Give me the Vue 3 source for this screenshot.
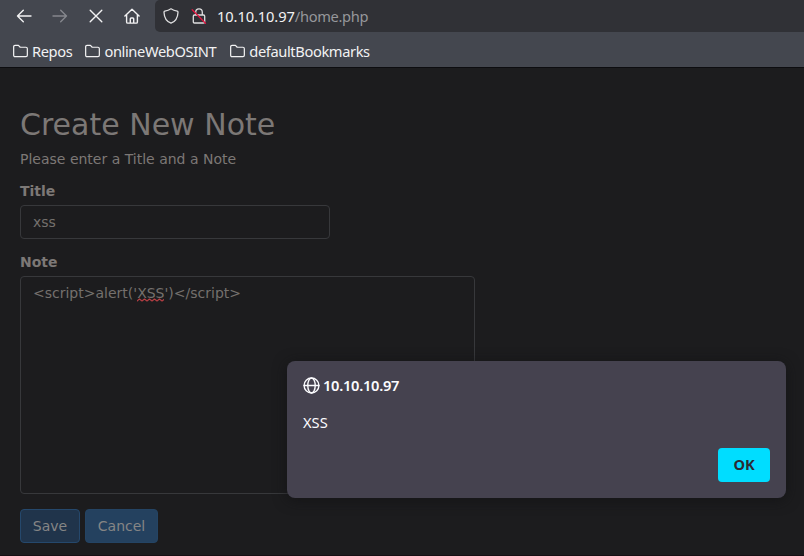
<script setup>
import { ref } from 'vue'

const bookmarks = ['Repos', 'onlineWebOSINT', 'defaultBookmarks']
const title = ref('xss')
const noteStart = "<script>alert('"
const noteEnd = "')<\/script>"
</script>

<template>
  <div class="window">
    <header class="chrome">
      <div class="navbar">
        <nav class="tools">
          <svg viewBox="0 0 16 16" class="icon"><path d="M15 8H1.5M7.3 2.2 1.5 8l5.8 5.8" /></svg>
          <svg viewBox="0 0 16 16" class="icon muted"><path d="M1 8h13.5M8.7 2.2 14.5 8l-5.800 5.800" /></svg>
          <svg viewBox="0 0 16 16" class="icon"><path d="m2.200 2.200 11.600 11.600M13.800 2.200 2.200 13.800" /></svg>
          <svg viewBox="0 0 16 16" class="icon"><path d="M.9 8 8 1.200 15.100 8M2.600 6.700v7.200q0 1.200 1.200 1.200h8.400q1.200 0 1.200-1.200V6.700M6.300 15v-4.200q0-.8.8-.8h1.800q.8 0 .8.8V15" /></svg>
        </nav>
        <div class="urlbar">
          <svg viewBox="0 0 16 16" class="icon"><path d="M8 .8c2 1.300 4.200 2 6.200 2.400.5.100.8.500.8 1C14.800 9.500 12.500 13.500 8 15.200 3.500 13.500 1.200 9.500 1 4.200c0-.5.300-.9.800-1C3.800 2.800 6 2.100 8 .8Z" /></svg>
          <svg viewBox="0 0 16 16" class="icon"><path d="M4.700 7V4.200a3.300 3.300 0 0 1 6.600 0V7M3.500 7h9q1.200 0 1.200 1.200v5.600q0 1.200-1.200 1.200h-9q-1.200 0-1.200-1.200V8.200Q2.300 7 3.500 7Z" /><path class="slash" d="m1.200 1.800 13.300 13.400" /></svg>
          <div class="address">10.10.10.97<span>/home.php</span></div>
        </div>
      </div>
      <div class="bookmarks">
        <div v-for="name in bookmarks" :key="name" class="bookmark">
          <svg viewBox="0 0 16 16" class="folder"><path d="M2.200 2h3.600l1.900 2h6.100q1.500 0 1.500 1.500v7q0 1.500-1.500 1.500H2.200Q.7 14 .7 12.500v-9Q.7 2 2.200 2Z" /></svg>
          <span>{{ name }}</span>
        </div>
      </div>
    </header>

    <main class="page">
      <h2>Create New Note</h2>
      <p>Please enter a Title and a Note</p>
      <label for="title">Title</label>
      <input id="title" v-model="title" class="control" type="text" />
      <label for="note">Note</label>
      <div id="note" class="control note">{{ noteStart }}<span class="misspelt">XSS<svg class="squiggle" viewBox="0 0 27 4"><path d="M0 3 2.500 1 5 3 7.500 1 10 3l2.500-2L15 3l2.500-2L20 3l2.500-2L25 3l2-1.500" /></svg></span>{{ noteEnd }}</div>
      <div class="actions">
        <button class="save">Save</button>
        <button class="cancel">Cancel</button>
      </div>
    </main>

    <section class="dialog" role="dialog">
      <div class="origin">
        <svg viewBox="0 0 16 16" class="globe"><circle cx="8" cy="8" r="7" /><ellipse cx="8" cy="8" rx="3.500" ry="7" /><path d="M1 8h14" /></svg>
        <span>10.10.10.97</span>
      </div>
      <div class="message">XSS</div>
      <button class="ok">OK</button>
    </section>
  </div>
</template>

<style>
body { background: #1c1c1e; overflow: hidden; }
</style>

<style scoped>
* { box-sizing: border-box; }
.window { position: relative; width: 804px; height: 556px; overflow: hidden; background: #1c1c1e; border-bottom: 1px solid #170f14; font-family: "DejaVu Sans", sans-serif; font-size: 14px; color: #7c7876; }
svg { display: block; flex: none; fill: none; stroke: currentColor; stroke-width: 1.3; stroke-linecap: round; stroke-linejoin: round; }
.chrome { height: 68px; background: #44474f; border-bottom: 1px solid #0d0d10; color: #f2f2f3; font-family: "Noto Sans", sans-serif; font-size: 14.67px; }
.navbar { display: flex; height: 32px; }
.tools { display: flex; gap: 20px; width: 155px; padding: 8px 0 0 16px; }
.icon { width: 16px; height: 16px; }
.tools .icon { stroke-width: 1.4; }
.muted { color: #85878d; }
.urlbar { flex: 1; display: flex; gap: 12px; padding: 8px 0 0 8px; background: #303136; border-radius: 5px 0 0 5px; color: #dededf; }
.slash { stroke: #e2143f; }
.address { line-height: 18px; margin: -1px 0 0 -2px; letter-spacing: -0.1px; color: #f2f2f3; white-space: nowrap; }
.address span { color: #96979b; letter-spacing: -0.32px; }
.bookmarks { display: flex; gap: 13px; padding: 9px 0 0 13px; line-height: 20px; letter-spacing: -0.38px; }
.bookmark { display: flex; align-items: center; gap: 4px; }
.bookmark:last-child { margin-left: 1px; }
.folder { width: 15px; height: 16px; }
.page { padding: 40px 20px 0; }
h2 { margin: 0 0 8px; font-size: 30px; font-weight: 400; line-height: 33px; }
p { margin: 0 0 10px; line-height: 20px; height: 22px; }
label { display: block; height: 20px; margin-bottom: 4px; line-height: 20px; font-weight: 700; }
.control { display: block; width: 310px; height: 34px; margin: 0 0 13px; padding: 6px 12px; border: 1px solid #37383b; border-radius: 4px; outline: 0; background: transparent; color: #74706d; font: inherit; line-height: 20px; }
.note { width: 455px; height: 218px; margin-bottom: 15px; }
.misspelt { position: relative; }
.squiggle { position: absolute; left: 0; bottom: -1px; width: 27px; height: 4px; stroke: #b43f44; stroke-width: 1.2; }
.actions { display: flex; gap: 5px; }
button { font: inherit; height: 34px; padding: 0; border: 1px solid #244464; border-radius: 4px; background: #24415f; color: #858585; }
.save { width: 60px; background: #20344b; border-color: #25486c; }
.cancel { width: 73px; }
.dialog { position: absolute; left: 287px; top: 361px; width: 499px; height: 137px; padding: 14px 16px 16px; display: flex; flex-direction: column; border-radius: 8px; background: #45424f; box-shadow: 0 2px 14px #101012aa; color: #fbfbfe; font-family: "Noto Sans", sans-serif; font-size: 14.67px; }
.origin { display: flex; align-items: center; gap: 3px; height: 20px; font-weight: 600; letter-spacing: -0.27px; }
.globe { width: 17px; height: 17px; }
.message { margin-top: 17px; line-height: 20px; }
.ok { align-self: flex-end; margin-top: auto; width: 52px; height: 34px; padding: 0 0 2px; border: 0; background: #00ddff; color: #2b2a33; font-weight: 700; letter-spacing: -0.2px; }
</style>
